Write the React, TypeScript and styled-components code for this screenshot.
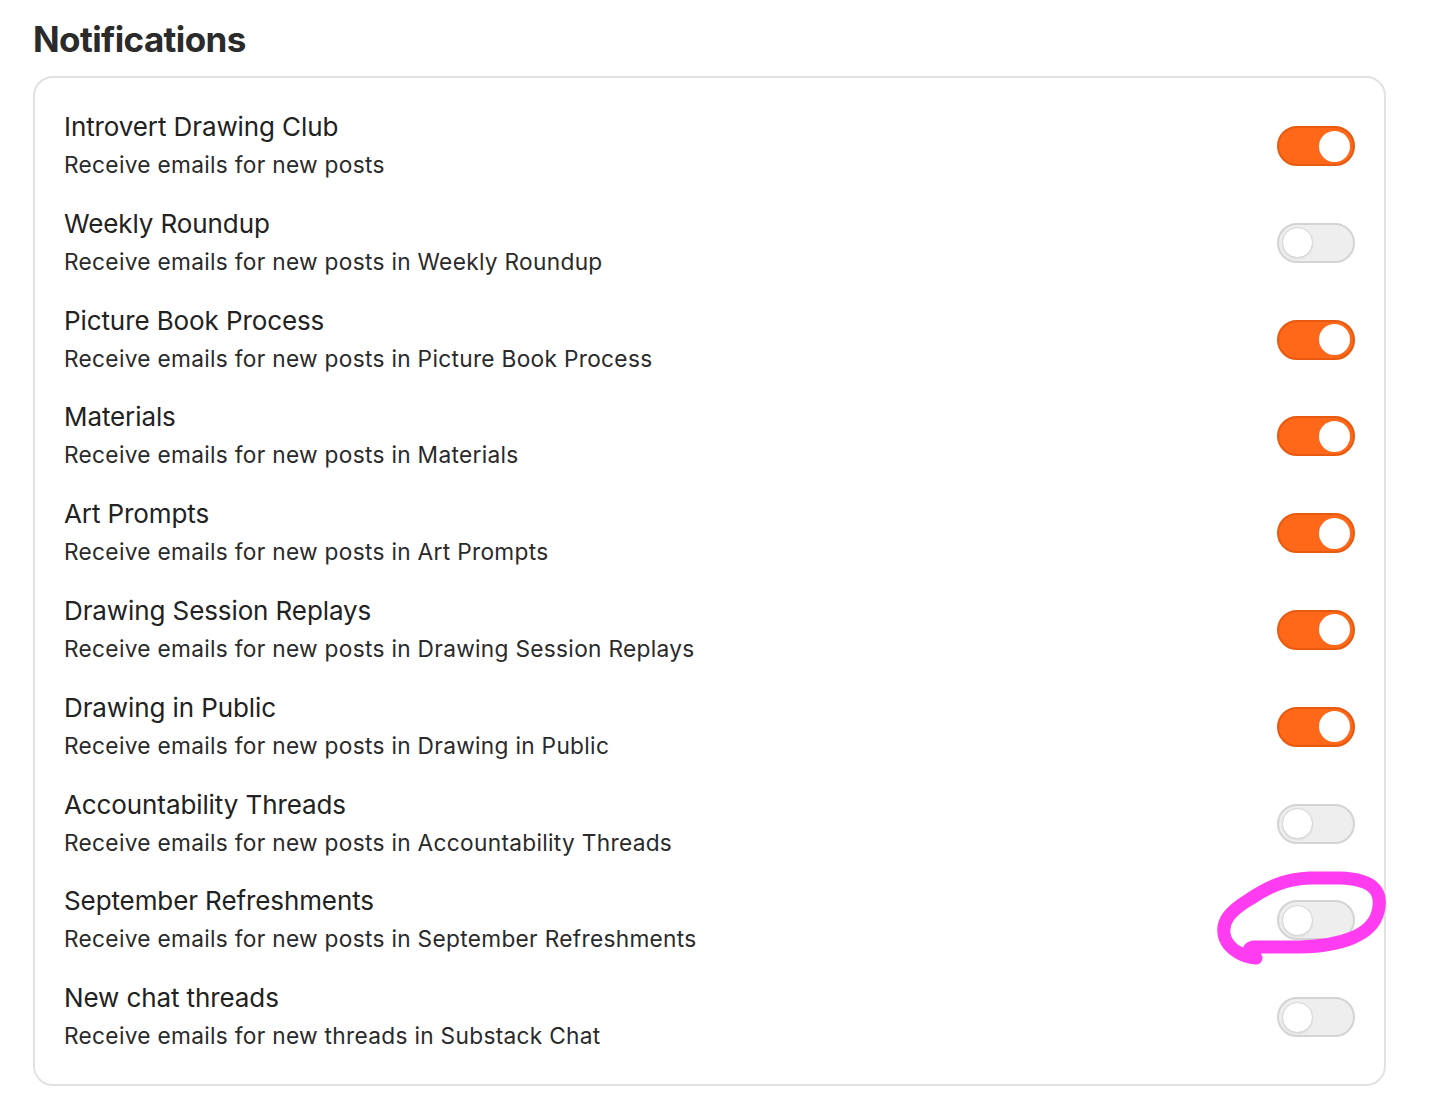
import React from "react";
import styled, { createGlobalStyle } from "styled-components";

const Global = createGlobalStyle`
  html, body { margin: 0; padding: 0; background: #ffffff; }
  body { font-family: Inter, "Noto Sans", "Liberation Sans", sans-serif; color: #222; }
`;

const Page = styled.div`
  position: relative;
  padding: 17px 70px 26px 33px;
`;

const Heading = styled.h1`
  margin: 0 0 14px 0;
  font-size: 35px;
  line-height: 45px;
  font-weight: 700;
  letter-spacing: -0.6px;
  color: #2b2b2b;
`;

const Card = styled.div`
  border: 2px solid #e2e2e2;
  border-radius: 20px;
  padding: 30px 29px 29px 29px;
  display: flex;
  flex-direction: column;
  gap: 20.8px;
`;

const Row = styled.div`
  display: flex;
  align-items: center;
  justify-content: space-between;
  height: 76px;
`;

const Texts = styled.div`
  display: flex;
  flex-direction: column;
`;

const Title = styled.div`
  font-size: 26px;
  line-height: 38px;
  color: #222;
  letter-spacing: -0.1px;
`;

const Sub = styled.div`
  font-size: 22.7px;
  line-height: 38px;
  color: #2a2a2a;
  letter-spacing: 0.3px;
`;

const Toggle = styled.div<{ $on: boolean }>`
  box-sizing: border-box;
  width: 78px;
  height: 40px;
  border-radius: 20px;
  flex-shrink: 0;
  display: flex;
  align-items: center;
  justify-content: ${(p) => (p.$on ? "flex-end" : "flex-start")};
  padding: 0 3px;
  background: ${(p) => (p.$on ? "#ff6719" : "#eeeeee")};
  border: 2px solid ${(p) => (p.$on ? "#e85a10" : "#d4d4d4")};
`;

const Knob = styled.div<{ $on: boolean }>`
  box-sizing: border-box;
  width: 31px;
  height: 31px;
  border-radius: 50%;
  background: #ffffff;
  border: ${(p) => (p.$on ? "none" : "1.5px solid #d6d6d6")};
  box-shadow: ${(p) => (p.$on ? "none" : "0 1px 2px rgba(0,0,0,0.08)")};
`;

const Scribble = styled.svg`
  position: absolute;
  left: 0;
  top: 0;
  width: 1456px;
  height: 1113px;
  pointer-events: none;
`;

const items: { title: string; sub: string; on: boolean }[] = [
  { title: "Introvert Drawing Club", sub: "Receive emails for new posts", on: true },
  { title: "Weekly Roundup", sub: "Receive emails for new posts in Weekly Roundup", on: false },
  { title: "Picture Book Process", sub: "Receive emails for new posts in Picture Book Process", on: true },
  { title: "Materials", sub: "Receive emails for new posts in Materials", on: true },
  { title: "Art Prompts", sub: "Receive emails for new posts in Art Prompts", on: true },
  { title: "Drawing Session Replays", sub: "Receive emails for new posts in Drawing Session Replays", on: true },
  { title: "Drawing in Public", sub: "Receive emails for new posts in Drawing in Public", on: true },
  { title: "Accountability Threads", sub: "Receive emails for new posts in Accountability Threads", on: false },
  { title: "September Refreshments", sub: "Receive emails for new posts in September Refreshments", on: false },
  { title: "New chat threads", sub: "Receive emails for new threads in Substack Chat", on: false },
];

export default function App() {
  return (
    <Page>
      <Global />
      <Heading>Notifications</Heading>
      <Card>
        {items.map((it) => (
          <Row key={it.title}>
            <Texts>
              <Title>{it.title}</Title>
              <Sub>{it.sub}</Sub>
            </Texts>
            <Toggle $on={it.on}>
              <Knob $on={it.on} />
            </Toggle>
          </Row>
        ))}
      </Card>
      <Scribble viewBox="0 0 1456 1113">
        <path
          d="M1256 958 C1250 953, 1246 949, 1253 947 L1300 947 C1340 946, 1372 936, 1378 912 C1384 889, 1370 879, 1340 878 L1310 878 C1285 879, 1268 887, 1250 899 C1230 911, 1220 922, 1225 938 C1230 951, 1245 957, 1256 958"
          fill="none"
          stroke="#ff3cf0"
          strokeWidth="13"
          strokeLinecap="round"
          strokeLinejoin="round"
        />
      </Scribble>
    </Page>
  );
}
